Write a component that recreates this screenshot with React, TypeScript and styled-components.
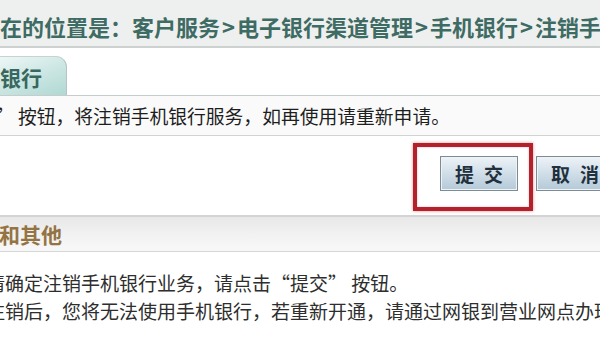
import React from "react";
import styled, { createGlobalStyle } from "styled-components";

const Global = createGlobalStyle`
  html, body {
    margin: 0;
    padding: 0;
    background: #ffffff;
  }
  body {
    width: 600px;
    height: 353px;
    overflow: hidden;
    font-family: "Noto Sans CJK SC", "Noto Sans", sans-serif;
  }
`;

const Page = styled.div`
  width: 600px;
  height: 353px;
  overflow: hidden;
  display: flex;
  flex-direction: column;
  background: #ffffff;
`;

const TopBar = styled.div`
  height: 48px;
  box-sizing: border-box;
  padding-top: 6px;
  display: flex;
  align-items: center;
  background: #eef0ef;
  border-bottom: 2px solid #cdd1d0;
  flex-shrink: 0;
  white-space: nowrap;
  overflow: hidden;
`;

const Crumb = styled.span`
  font-size: 22px;
  font-weight: 700;
  color: #3e6b63;
`;

const Sep = styled.span`
  padding: 0 2px;
`;

const TabStrip = styled.div`
  height: 48px;
  box-sizing: border-box;
  display: flex;
  align-items: flex-end;
  border-bottom: 1px solid #c6cccb;
  flex-shrink: 0;
`;

const Tab = styled.div`
  height: 39px;
  width: 67px;
  box-sizing: border-box;
  display: flex;
  align-items: center;
  padding-top: 2px;
  background: linear-gradient(160deg, #eef7f6 0%, #cfe8e5 45%, #b0d8d3 100%);
  border-top: 1px solid #c3d4d2;
  border-right: 1px solid #b3c6c3;
  border-radius: 0 11px 0 0;
  font-size: 21px;
  font-weight: 700;
  color: #386760;
  white-space: nowrap;
`;

const NoticeRow = styled.div`
  height: 40px;
  box-sizing: border-box;
  display: flex;
  align-items: center;
  background: #fafafa;
  border-bottom: 1px solid #d3d3d3;
  flex-shrink: 0;
  white-space: nowrap;
  overflow: hidden;
`;

const NoticeText = styled.span`
  margin-left: -5px;
  font-size: 18.8px;
  color: #1e1e1e;
`;

const ButtonRow = styled.div`
  height: 81px;
  box-sizing: border-box;
  display: flex;
  align-items: flex-start;
  padding: 7px 0 0 413px;
  border-bottom: 2px solid #d4d4d4;
  flex-shrink: 0;
  white-space: nowrap;
`;

const Highlight = styled.div`
  width: 120px;
  height: 68px;
  box-sizing: border-box;
  border: 4px solid #b3222c;
  box-shadow: 0 0 3px rgba(200, 40, 50, 0.5), inset 0 0 2px rgba(200, 40, 50, 0.4);
  padding: 9px 0 0 23px;
  flex-shrink: 0;
`;

const FormButton = styled.button<{ $wide?: boolean }>`
  width: ${(p) => (p.$wide ? "90px" : "78px")};
  height: 35px;
  box-sizing: border-box;
  margin: ${(p) => (p.$wide ? "13px 0 0 3px" : "0")};
  padding: 0 0 0 ${(p) => (p.$wide ? "4px" : "0")};
  flex-shrink: 0;
  border: 1px solid #7d8b95;
  box-shadow: inset 0 0 0 1px #eef3f6;
  background: linear-gradient(180deg, #eef3f7 0%, #d3e0ea 45%, #b4c9d8 100%);
  font-family: "Noto Sans CJK SC", sans-serif;
  font-size: 19px;
  font-weight: 700;
  color: #22303d;
  letter-spacing: 10px;
  text-indent: 10px;
  text-align: ${(p) => (p.$wide ? "left" : "center")};
  cursor: pointer;
`;

const SectionHeader = styled.div`
  height: 35px;
  box-sizing: border-box;
  display: flex;
  align-items: center;
  background: linear-gradient(180deg, #e8e8e8 0%, #f2f2f2 55%, #f8f8f8 100%);
  border-bottom: 1px solid #d6d6d6;
  flex-shrink: 0;
  white-space: nowrap;
`;

const SectionTitle = styled.span`
  font-size: 21px;
  font-weight: 700;
  color: #947444;
  margin-left: -1px;
`;

const Body = styled.div`
  padding-top: 17px;
  display: flex;
  flex-direction: column;
`;

const Line = styled.div`
  height: 28px;
  line-height: 28px;
  font-size: 19px;
  color: #2e2e2e;
  white-space: nowrap;
  margin-left: -14px;
`;

export default function App() {
  return (
    <Page>
      <Global />
      <TopBar>
        <Crumb>
          在的位置是：客户服务<Sep>&gt;</Sep>电子银行渠道管理<Sep>&gt;</Sep>手机银行<Sep>&gt;</Sep>注销手机银行
        </Crumb>
      </TopBar>
      <TabStrip>
        <Tab>银行</Tab>
      </TabStrip>
      <NoticeRow>
        <NoticeText>” 按钮，将注销手机银行服务，如再使用请重新申请。</NoticeText>
      </NoticeRow>
      <ButtonRow>
        <Highlight>
          <FormButton>提交</FormButton>
        </Highlight>
        <FormButton $wide>取消</FormButton>
      </ButtonRow>
      <SectionHeader>
        <SectionTitle>和其他</SectionTitle>
      </SectionHeader>
      <Body>
        <Line>请确定注销手机银行业务，请点击“提交” 按钮。</Line>
        <Line>注销后，您将无法使用手机银行，若重新开通，请通过网银到营业网点办理。</Line>
      </Body>
    </Page>
  );
}
